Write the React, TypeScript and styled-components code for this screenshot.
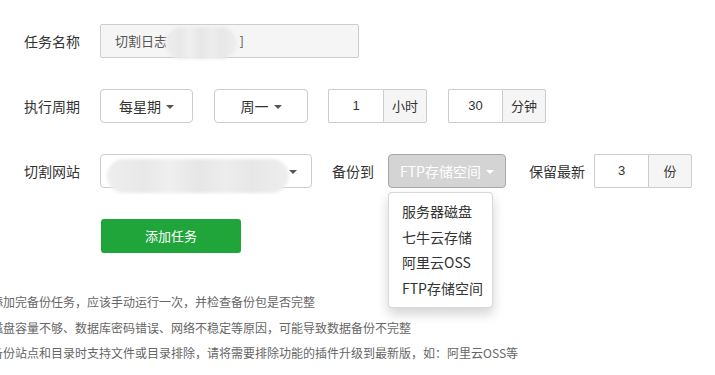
import { FunctionComponent, ReactNode } from 'react';
import styled, { createGlobalStyle } from 'styled-components';

const GlobalStyle = createGlobalStyle`
  html, body {
    margin: 0;
    padding: 0;
    background: #fff;
    overflow: hidden;
  }
  body {
    font-family: "Noto Sans CJK SC", "Liberation Sans", sans-serif;
    color: #333;
  }
`;

const Page = styled.div`
  width: 715px;
  height: 375px;
  padding: 24px 0 0 24px;
  box-sizing: border-box;
  position: relative;
`;

const Row = styled.div<{ $gap?: number }>`
  display: flex;
  align-items: center;
  height: 34px;
  margin-bottom: ${(p) => (p.$gap ?? 31)}px;
`;

const Label = styled.div<{ $width?: number }>`
  width: ${(p) => p.$width ?? 76}px;
  flex: none;
  font-size: 14px;
  line-height: 20px;
  color: #333;
`;

const NameInput = styled.div`
  position: relative;
  width: 259px;
  height: 34px;
  box-sizing: border-box;
  border: 1px solid #ccc;
  border-radius: 2px;
  background: #f5f5f5;
  color: #555;
  font-size: 13px;
  line-height: 32px;
  padding-left: 14px;
`;

const Hidden = styled.span<{ $w: number }>`
  display: inline-block;
  width: ${(p) => p.$w}px;
`;

const Blur = styled.span<{ $left: number; $top: number; $w: number; $h: number }>`
  position: absolute;
  left: ${(p) => p.$left}px;
  top: ${(p) => p.$top}px;
  width: ${(p) => p.$w}px;
  height: ${(p) => p.$h}px;
  border-radius: ${(p) => p.$h / 2}px;
  background: linear-gradient(
    90deg,
    #eeeeee 0%,
    #e8e8e8 20%,
    #efefef 35%,
    #e6e6e6 50%,
    #ededed 65%,
    #e7e7e7 80%,
    #eeeeee 100%
  );
  filter: blur(1.5px);
`;

const SelectButton = styled.div<{ $width: number; $active?: boolean }>`
  position: relative;
  display: flex;
  align-items: center;
  justify-content: center;
  gap: 5px;
  width: ${(p) => p.$width}px;
  height: 34px;
  box-sizing: border-box;
  border: 1px solid ${(p) => (p.$active ? '#a8a8a8' : '#ccc')};
  border-radius: 4px;
  background: ${(p) => (p.$active ? '#d4d4d4' : '#fff')};
  color: ${(p) => (p.$active ? '#fff' : '#333')};
  font-size: 14px;
  line-height: 20px;
`;

const Caret = styled.span<{ $light?: boolean }>`
  display: inline-block;
  width: 0;
  height: 0;
  border-top: 4px solid ${(p) => (p.$light ? '#fff' : '#555')};
  border-left: 4px solid transparent;
  border-right: 4px solid transparent;
  margin-top: 1px;
`;

const SiteSelect = styled.div`
  position: relative;
  width: 212px;
  height: 34px;
  box-sizing: border-box;
  border: 1px solid #ccc;
  border-radius: 4px;
  background: #fff;
  display: flex;
  align-items: center;
  justify-content: flex-end;
  padding-right: 14px;
`;

const Group = styled.div`
  display: flex;
  height: 34px;
`;

const GroupInput = styled.div<{ $width: number }>`
  width: ${(p) => p.$width}px;
  box-sizing: border-box;
  border: 1px solid #ccc;
  border-right: none;
  border-radius: 2px 0 0 2px;
  font-family: "Liberation Sans", sans-serif;
  font-size: 13px;
  line-height: 32px;
  text-align: center;
  color: #333;
`;

const Addon = styled.div`
  width: 44px;
  box-sizing: border-box;
  border: 1px solid #ccc;
  border-radius: 0 2px 2px 0;
  background: #f5f5f5;
  font-size: 13px;
  line-height: 32px;
  text-align: center;
  color: #333;
`;

const Spacer = styled.div<{ $w: number }>`
  width: ${(p) => p.$w}px;
  flex: none;
`;

const Dropdown = styled.ul`
  position: absolute;
  top: 37px;
  left: -1px;
  width: 105px;
  box-sizing: border-box;
  margin: 0;
  padding: 6px 0 6px;
  list-style: none;
  background: #fff;
  border: 1px solid rgba(0, 0, 0, 0.15);
  border-radius: 4px;
  box-shadow: 0 6px 12px rgba(0, 0, 0, 0.175);
  z-index: 10;
`;

const DropItem = styled.li`
  height: 25.5px;
  line-height: 25.5px;
  padding-left: 13px;
  font-size: 14px;
  color: #333;
  white-space: nowrap;
`;

const AddButton = styled.div`
  margin-left: 77px;
  width: 140px;
  height: 34px;
  border-radius: 3px;
  background: #20a53a;
  color: #fff;
  font-size: 13px;
  line-height: 34px;
  text-align: center;
`;

const Notes = styled.ul`
  margin: 36px 0 0 -33px;
  padding: 0;
  list-style: none;
`;

const Note = styled.li`
  font-size: 12px;
  line-height: 25.5px;
  color: #666;
  white-space: nowrap;
`;

const FieldLabel: FunctionComponent<{ children: ReactNode; width?: number }> = ({ children, width }) => (
  <Label $width={width}>{children}</Label>
);

const App = () => {
  return (
    <>
      <GlobalStyle />
      <Page>
        <Row>
          <FieldLabel>任务名称</FieldLabel>
          <NameInput>
            切割日志[<Hidden $w={68} />]
            <Blur $left={64} $top={2} $w={72} $h={32} />
          </NameInput>
        </Row>

        <Row>
          <FieldLabel>执行周期</FieldLabel>
          <SelectButton $width={93}>
            每星期 <Caret />
          </SelectButton>
          <Spacer $w={21} />
          <SelectButton $width={94}>
            周一 <Caret />
          </SelectButton>
          <Spacer $w={20} />
          <Group>
            <GroupInput $width={55}>1</GroupInput>
            <Addon>小时</Addon>
          </Group>
          <Spacer $w={21} />
          <Group>
            <GroupInput $width={54}>30</GroupInput>
            <Addon>分钟</Addon>
          </Group>
        </Row>

        <Row>
          <FieldLabel>切割网站</FieldLabel>
          <SiteSelect>
            <Blur $left={6} $top={4} $w={182} $h={34} />
            <Caret />
          </SiteSelect>
          <Spacer $w={20} />
          <FieldLabel width={56}>备份到</FieldLabel>
          <SelectButton $width={118} $active>
            FTP存储空间 <Caret $light />
            <Dropdown>
              <DropItem>服务器磁盘</DropItem>
              <DropItem>七牛云存储</DropItem>
              <DropItem>阿里云OSS</DropItem>
              <DropItem>FTP存储空间</DropItem>
            </Dropdown>
          </SelectButton>
          <Spacer $w={23} />
          <FieldLabel width={65}>保留最新</FieldLabel>
          <Group>
            <GroupInput $width={54}>3</GroupInput>
            <Addon>份</Addon>
          </Group>
        </Row>

        <Row $gap={0}>
          <AddButton>添加任务</AddButton>
        </Row>

        <Notes>
          <Note>添加完备份任务，应该手动运行一次，并检查备份包是否完整</Note>
          <Note>磁盘容量不够、数据库密码错误、网络不稳定等原因，可能导致数据备份不完整</Note>
          <Note>备份站点和目录时支持文件或目录排除，请将需要排除功能的插件升级到最新版，如：阿里云OSS等</Note>
        </Notes>
      </Page>
    </>
  );
};

export default App;
